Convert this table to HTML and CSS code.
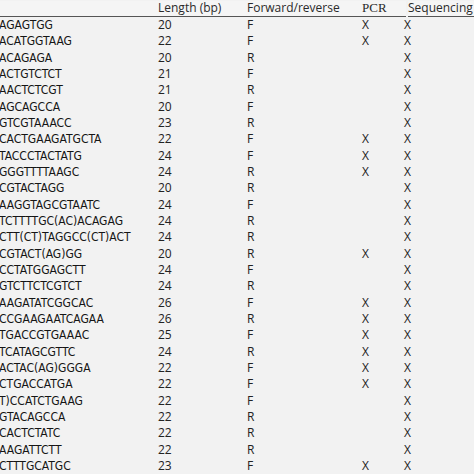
FILE: index.html
```html
<!DOCTYPE html>
<html>
<head>
<meta charset="utf-8">
<link rel="stylesheet" href="styles.css">
</head>
<body>
<div class="frame">
  <div class="table">
    <div class="hd seq"></div>
    <div class="hd">Length (bp)</div>
    <div class="hd">Forward/reverse</div>
    <div class="hd pcr">PCR</div>
    <div class="hd sq">Sequencing</div>

    <div class="seq">AGAGTGG</div><div>20</div><div>F</div><div class="x">X</div><div class="x2">X</div>
    <div class="seq">ACATGGTAAG</div><div>22</div><div>F</div><div class="x">X</div><div class="x2">X</div>
    <div class="seq">ACAGAGA</div><div>20</div><div>R</div><div class="x"></div><div class="x2">X</div>
    <div class="seq">ACTGTCTCT</div><div>21</div><div>F</div><div class="x"></div><div class="x2">X</div>
    <div class="seq">AACTCTCGT</div><div>21</div><div>R</div><div class="x"></div><div class="x2">X</div>
    <div class="seq">AGCAGCCA</div><div>20</div><div>F</div><div class="x"></div><div class="x2">X</div>
    <div class="seq">GTCGTAAACC</div><div>23</div><div>R</div><div class="x"></div><div class="x2">X</div>
    <div class="seq">CACTGAAGATGCTA</div><div>22</div><div>F</div><div class="x">X</div><div class="x2">X</div>
    <div class="seq">TACCCTACTATG</div><div>24</div><div>F</div><div class="x">X</div><div class="x2">X</div>
    <div class="seq">GGGTTTTAAGC</div><div>24</div><div>R</div><div class="x">X</div><div class="x2">X</div>
    <div class="seq">CGTACTAGG</div><div>20</div><div>R</div><div class="x"></div><div class="x2">X</div>
    <div class="seq">AAGGTAGCGTAATC</div><div>24</div><div>F</div><div class="x"></div><div class="x2">X</div>
    <div class="seq">TCTTTTGC(AC)ACAGAG</div><div>24</div><div>R</div><div class="x"></div><div class="x2">X</div>
    <div class="seq">CTT(CT)TAGGCC(CT)ACT</div><div>24</div><div>R</div><div class="x"></div><div class="x2">X</div>
    <div class="seq">CGTACT(AG)GG</div><div>20</div><div>R</div><div class="x">X</div><div class="x2">X</div>
    <div class="seq">CCTATGGAGCTT</div><div>24</div><div>F</div><div class="x"></div><div class="x2">X</div>
    <div class="seq">GTCTTCTCGTCT</div><div>24</div><div>R</div><div class="x"></div><div class="x2">X</div>
    <div class="seq">AAGATATCGGCAC</div><div>26</div><div>F</div><div class="x">X</div><div class="x2">X</div>
    <div class="seq">CCGAAGAATCAGAA</div><div>26</div><div>R</div><div class="x">X</div><div class="x2">X</div>
    <div class="seq">TGACCGTGAAAC</div><div>25</div><div>F</div><div class="x">X</div><div class="x2">X</div>
    <div class="seq">TCATAGCGTTC</div><div>24</div><div>R</div><div class="x">X</div><div class="x2">X</div>
    <div class="seq">ACTAC(AG)GGGA</div><div>22</div><div>F</div><div class="x">X</div><div class="x2">X</div>
    <div class="seq">CTGACCATGA</div><div>22</div><div>F</div><div class="x">X</div><div class="x2">X</div>
    <div class="seq">T)CCATCTGAAG</div><div>22</div><div>F</div><div class="x"></div><div class="x2">X</div>
    <div class="seq">GTACAGCCA</div><div>22</div><div>R</div><div class="x"></div><div class="x2">X</div>
    <div class="seq">CACTCTATC</div><div>22</div><div>R</div><div class="x"></div><div class="x2">X</div>
    <div class="seq">AAGATTCTT</div><div>22</div><div>R</div><div class="x"></div><div class="x2">X</div>
    <div class="seq">CTTTGCATGC</div><div>23</div><div>F</div><div class="x">X</div><div class="x2">X</div>
  </div>
</div>
</body>
</html>
```
FILE: styles.css
```css
html, body {
  margin: 0;
  padding: 0;
  background: #f2f2f2;
}
.frame {
  width: 474px;
  height: 474px;
  overflow: hidden;
  background: #f2f2f2;
}
.table {
  display: grid;
  grid-template-columns: 158px 89px 115px 44px 68px;
  grid-template-rows: 16px;
  grid-auto-rows: 16.33px;
  font-family: "Open Sans", Lato, sans-serif;
  font-size: 12px;
  color: #222;
  padding-top: 1px;
}
.table > div {
  line-height: 16.33px;
  white-space: nowrap;
}
.table > .hd {
  line-height: 14px;
  border-bottom: 1px solid #555;
  height: 15px;
  color: #2a2a2a;
  background: #f5f5f5;
}
.table > .seq {
  font-family: "DejaVu Sans Condensed", "DejaVu Sans", sans-serif;
  font-stretch: condensed;
  font-size: 12px;
  color: #151515;
  margin-left: -1px;
}
.table > .hd.seq {
  margin-left: 0;
}
.pcr {
  font-family: "Liberation Serif", serif;
  font-size: 13px;
}
.x2 {
  margin-left: -2px;
}
.hd.sq {
  margin-left: 2px;
}
```
